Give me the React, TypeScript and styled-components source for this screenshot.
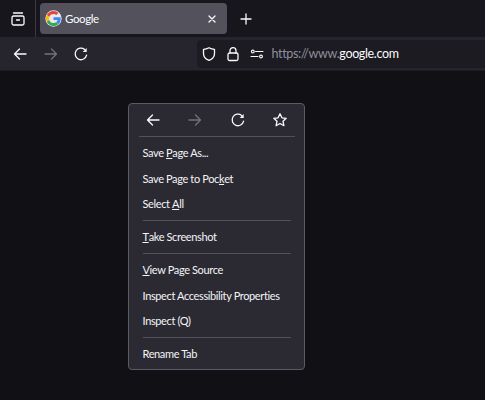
import * as React from 'react';
import styled, { createGlobalStyle } from 'styled-components';

const GlobalStyle = createGlobalStyle`
  html, body { margin: 0; padding: 0; background: #101015; }
  body { font-family: Lato, "Noto Sans", "Liberation Sans", sans-serif; }
`;

const Page = styled.div`
  position: relative;
  width: 485px;
  height: 400px;
  overflow: hidden;
  background: #101015;
`;

const TabStrip = styled.div`
  display: flex;
  align-items: center;
  height: 37px;
  background: #17161c;
`;

const SidebarButton = styled.div`
  display: flex;
  align-items: center;
  justify-content: center;
  width: 35px;
  height: 37px;
  border-right: 1px solid #3a3944;
  color: #fbfbfe;
`;

const Tab = styled.div`
  display: flex;
  align-items: center;
  width: 187px;
  height: 31px;
  margin-left: 4px;
  padding: 0 9px 0 5px;
  box-sizing: border-box;
  border-radius: 4px;
  background: #53525c;
  color: #fbfbfe;
  font-size: 11.5px;
  letter-spacing: -0.4px;
`;

const TabTitle = styled.span`
  flex: 1;
  margin-left: 3px;
`;

const NewTab = styled.div`
  display: flex;
  margin-left: 11px;
  color: #fbfbfe;
`;

const Toolbar = styled.div`
  display: flex;
  align-items: center;
  height: 34px;
  background: #26252e;
  border-bottom: 1px solid #1c1b22;
  box-sizing: border-box;
`;

const NavButton = styled.div<{ $off?: boolean }>`
  display: flex;
  width: 30.5px;
  justify-content: center;
  color: ${p => (p.$off ? '#72717a' : '#fbfbfe')};
`;

const NavGroup = styled.div`
  display: flex;
  padding-left: 5px;
`;

const UrlBar = styled.div`
  display: flex;
  align-items: center;
  height: 28px;
  flex: 1;
  margin-left: 100px;
  padding-left: 4px;
  gap: 8px;
  background: #1c1b22;
  border-radius: 4px 0 0 4px;
  color: #fbfbfe;
`;

const UrlText = styled.span`
  margin-left: -1px;
  font-size: 12.5px;
  letter-spacing: -0.35px;
  color: #fbfbfe;
`;

const UrlDim = styled.span`
  color: #8f8f9d;
`;

const Menu = styled.div`
  position: absolute;
  left: 128px;
  top: 103px;
  width: 177px;
  height: 267px;
  padding: 0 13.5px;
  box-sizing: border-box;
  background: #2b2a33;
  border: 1px solid #5b5b66;
  border-radius: 4px;
  color: #f4f4f7;
  font-size: 11px;
  letter-spacing: -0.37px;
`;

const MenuIcons = styled.div`
  display: flex;
  justify-content: space-between;
  align-items: center;
  height: 32px;
  padding: 0 2px;
`;

const MenuIcon = styled.div<{ $off?: boolean }>`
  display: flex;
  color: ${p => (p.$off ? '#72717a' : '#fbfbfe')};
`;

const Divider = styled.div<{ $wide?: boolean }>`
  height: 1px;
  margin: 0 ${p => (p.$wide ? '-4px' : '0')};
  background: #52515b;
`;

const MenuItem = styled.div`
  display: flex;
  align-items: center;
  height: 25.5px;
  white-space: pre;
`;

const MenuSection = styled.div`
  padding: 3px 0 3.5px;
`;

const Key = styled.span`
  text-decoration: underline;
  text-underline-offset: 1px;
`;

type IconProps = { size?: number };

const Svg: React.FC<React.PropsWithChildren<IconProps>> = ({ size = 16, children }) => (
  <svg
    width={size}
    height={size}
    viewBox="0 0 16 16"
    fill="none"
    stroke="currentColor"
    strokeWidth={1.3}
    strokeLinecap="round"
    strokeLinejoin="round"
  >
    {children}
  </svg>
);

const BackIcon = () => (
  <Svg>
    <path d="M14 8H2.500M7.500 3 2.500 8l5 5" />
  </Svg>
);

const ForwardIcon = () => (
  <Svg>
    <path d="M2 8h11.500M8.500 3l5 5-5 5" />
  </Svg>
);

const ReloadIcon = () => (
  <Svg>
    <path d="M13.600 9.200A5.800 5.800 0 1 1 11.600 3.400" />
    <path d="M13.700 2v4h-4z" fill="currentColor" stroke="none" />
  </Svg>
);

const StarIcon = () => (
  <Svg>
    <path d="M8 1.800l1.900 4 4.300.5-3.200 3 .9 4.400L8 11.500l-3.900 2.200.9-4.400-3.200-3 4.300-.5z" />
  </Svg>
);

const ShieldIcon = () => (
  <Svg>
    <path d="M8 1.800c1.700 1 3.400 1.500 5.500 1.600v4c0 3.200-2.200 5.600-5.500 6.900-3.300-1.300-5.500-3.700-5.500-6.900v-4C4.600 3.300 6.300 2.800 8 1.800z" />
  </Svg>
);

const LockIcon = () => (
  <Svg>
    <rect x="3" y="7" width="10" height="7.500" rx="1.500" />
    <path d="M5 7V4.600a3 3 0 0 1 6 0V7" />
  </Svg>
);

const PermissionsIcon = () => (
  <Svg>
    <path d="M6.500 5.500h7.500M2 10.500h7" strokeWidth={1.100} />
    <circle cx="3.800" cy="5.500" r="1.400" strokeWidth={1.100} />
    <circle cx="12" cy="10.500" r="1.400" strokeWidth={1.100} />
  </Svg>
);

const SidebarIcon = () => (
  <Svg>
    <path d="M3.500 2h9" />
    <rect x="2" y="5" width="12" height="9" rx="1.500" />
    <path d="M6.500 9h3" />
  </Svg>
);

const CloseIcon = () => (
  <Svg size={12}>
    <path d="M4 4l8 8M12 4l-8 8" strokeWidth={1.700} />
  </Svg>
);

const PlusIcon = () => (
  <Svg>
    <path d="M3 8h10M8 3v10" />
  </Svg>
);

const GoogleLogo = () => (
  <svg width="17" height="17" viewBox="-3 -3 54 54">
    <circle cx="24" cy="24" r="26" fill="#e9e9ec" />
    <path fill="#EA4335" d="M24 9.500c3.500 0 6.700 1.300 9.100 3.400l6.800-6.800C35.800 2.400 30.200 0 24 0 14.600 0 6.500 5.400 2.600 13.200l7.900 6.200C12.400 13.600 17.700 9.500 24 9.500z" />
    <path fill="#4285F4" d="M46.900 24.500c0-1.600-.1-3.100-.4-4.500H24v9h12.900c-.6 3-2.200 5.500-4.700 7.200l7.700 6c4.500-4.200 7-10.300 7-17.700z" />
    <path fill="#FBBC05" d="M10.500 28.600c-.5-1.400-.8-3-.8-4.600s.3-3.200.8-4.600l-7.900-6.200C.9 16.500 0 20.100 0 24s.9 7.500 2.600 10.800z" />
    <path fill="#34A853" d="M24 48c6.500 0 11.900-2.100 15.900-5.800l-7.700-6c-2.200 1.500-4.900 2.300-8.200 2.300-6.300 0-11.600-4.100-13.500-9.900l-7.900 6.100C6.500 42.600 14.600 48 24 48z" />
  </svg>
);

const App: React.FC = () => (
  <Page>
    <GlobalStyle />
    <TabStrip>
      <SidebarButton>
        <SidebarIcon />
      </SidebarButton>
      <Tab>
        <GoogleLogo />
        <TabTitle>Google</TabTitle>
        <CloseIcon />
      </Tab>
      <NewTab>
        <PlusIcon />
      </NewTab>
    </TabStrip>
    <Toolbar>
      <NavGroup>
        <NavButton>
          <BackIcon />
        </NavButton>
        <NavButton $off>
          <ForwardIcon />
        </NavButton>
        <NavButton>
          <ReloadIcon />
        </NavButton>
      </NavGroup>
      <UrlBar>
        <ShieldIcon />
        <LockIcon />
        <PermissionsIcon />
        <UrlText>
          <UrlDim>https://www.</UrlDim>google.com
        </UrlText>
      </UrlBar>
    </Toolbar>
    <Menu>
      <MenuIcons>
        <MenuIcon>
          <BackIcon />
        </MenuIcon>
        <MenuIcon $off>
          <ForwardIcon />
        </MenuIcon>
        <MenuIcon>
          <ReloadIcon />
        </MenuIcon>
        <MenuIcon>
          <StarIcon />
        </MenuIcon>
      </MenuIcons>
      <Divider $wide />
      <MenuSection>
        <MenuItem>
          Save <Key>P</Key>age As...
        </MenuItem>
        <MenuItem>
          Save Page to Poc<Key>k</Key>et
        </MenuItem>
        <MenuItem>
          Select <Key>A</Key>ll
        </MenuItem>
      </MenuSection>
      <Divider />
      <MenuSection>
        <MenuItem>
          <Key>T</Key>ake Screenshot
        </MenuItem>
      </MenuSection>
      <Divider />
      <MenuSection>
        <MenuItem>
          <Key>V</Key>iew Page Source
        </MenuItem>
        <MenuItem>Inspect Accessibility Properties</MenuItem>
        <MenuItem>Inspect (Q)</MenuItem>
      </MenuSection>
      <Divider />
      <MenuSection>
        <MenuItem>Rename Tab</MenuItem>
      </MenuSection>
    </Menu>
  </Page>
);

export default App;
